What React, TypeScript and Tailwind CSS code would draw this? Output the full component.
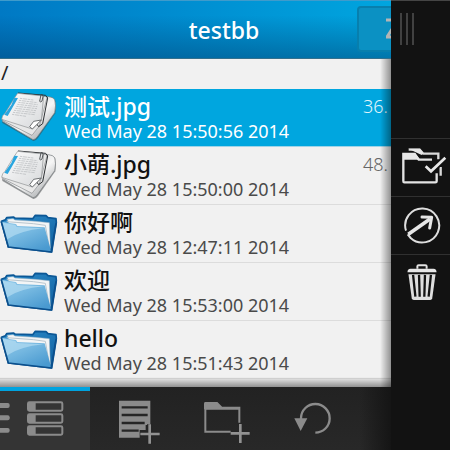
import React from "react";

type Entry = { name: string; date: string; kind: "file" | "folder"; size?: string; selected?: boolean };

const entries: Entry[] = [
  { name: "测试.jpg", date: "Wed May 28 15:50:56 2014", kind: "file", size: "36.", selected: true },
  { name: "小萌.jpg", date: "Wed May 28 15:50:00 2014", kind: "file", size: "48." },
  { name: "你好啊", date: "Wed May 28 12:47:11 2014", kind: "folder" },
  { name: "欢迎", date: "Wed May 28 15:53:00 2014", kind: "folder" },
  { name: "hello", date: "Wed May 28 15:51:43 2014", kind: "folder" },
];

function FileIcon() {
  return (
    <svg viewBox="0 -3 174 174" className="size-[58px] shrink-0" aria-hidden="true">
      <defs>
        <linearGradient id="paper" x1="0" y1="0" x2="1" y2="1">
          <stop offset="0" stopColor="#ffffff" />
          <stop offset="1" stopColor="#d6d8da" />
        </linearGradient>
        <linearGradient id="paperBack" x1="0" y1="0" x2="1" y2="1">
          <stop offset="0" stopColor="#bfc3c6" />
          <stop offset="0.55" stopColor="#f6f6f6" />
          <stop offset="1" stopColor="#8d9194" />
        </linearGradient>
      </defs>
      <path d="M6 98 L100 153 Q106 154 114 144 L166 70 Q170 52 166 32 Q162 22 145 20 L90 30 L30 70Z" fill="#3b3f42" opacity="0.5" />
      <path d="M7 94 L99 149 Q107 149 113 139 L164 68 Q169 46 164 29 Q159 21 145 20 L80 40Z" fill="url(#paperBack)" stroke="#777b7e" strokeWidth="2" />
      <path d="M7 91 L96 136 L118 108 L142 20 L56 12Z" fill="#e8e8e8" stroke="#8a8d90" strokeWidth="2" />
      <path d="M54 9 L137 16 L143 24 L128 101 L116 110 L100 88" fill="none" stroke="#2d3033" strokeWidth="3" />
      <path d="M53 10 L131 18 L124 90 L97 117 L5 88 Q6 76 15 70 L42 26Z" fill="url(#paper)" stroke="#8c8f91" strokeWidth="2" />
      <path d="M43 23 L54 24 L23 78 L13 74 L34 45Z" fill="#2aa6df" />
      <g stroke="#b4b7ba" strokeWidth="2" strokeDasharray="7 2 12 2">
        <path d="M60 25 L100 30 M57 31 L112 38 M55 37 L113 44 M52 43 L112 50 M49 49 L111 56 M46 55 L108 62 M42 61 L106 68 M39 67 L104 74 M36 73 L78 79" />
      </g>
      <path d="M124 90 L97 117 L89 110 L101 94Z" fill="#fff" stroke="#55595b" strokeWidth="2.5" strokeLinejoin="round" />
      <path d="M119 34 L123 14 Q129 12 129 19 L126 33 Q122 38 119 34" fill="none" stroke="#3c4043" strokeWidth="2.5" />
    </svg>
  );
}

function FolderIcon() {
  return (
    <svg viewBox="0 15 174 174" className="size-[58px] shrink-0" aria-hidden="true">
      <defs>
        <linearGradient id="folderFront" x1="0" y1="0" x2="0.7" y2="1">
          <stop offset="0" stopColor="#8fc8ea" />
          <stop offset="0.5" stopColor="#74b7e0" />
          <stop offset="1" stopColor="#4a9ad0" />
        </linearGradient>
        <linearGradient id="folderBack" x1="0" y1="0" x2="1" y2="1">
          <stop offset="0" stopColor="#2f8fce" />
          <stop offset="1" stopColor="#0e5f9e" />
        </linearGradient>
      </defs>
      <path d="M4 64 L16 59 L20 53 L40 51 L45 54 L98 56 L106 46 L138 47 L144 53 L168 56 L169 68 L155 156 L25 141Z" fill="url(#folderBack)" stroke="#0b5796" strokeWidth="5" strokeLinejoin="round" />
      <path d="M22 58 L40 56 L44 60 L105 64 L148 68 L151 145 L30 82Z" fill="#f3f5f6" stroke="#9eb4c2" strokeWidth="1.5" />
      <path d="M20 65 L100 71 L136 76 L148 142" fill="none" stroke="#b9c6ce" strokeWidth="3" />
      <path d="M4 65 L48 72 L52 78 L134 82 L154 156 L25 141Z" fill="url(#folderFront)" />
      <path d="M8 68 L46 75 L50 81 L130 85 Q60 92 19 119Z" fill="#b9def3" opacity="0.65" />
      <path d="M4 65 L25 141 L154 156 L168 70" fill="none" stroke="#0b4f8c" strokeWidth="5" strokeLinejoin="round" />
    </svg>
  );
}

function ListIcon() {
  return (
    <svg viewBox="0 11 270 177" className="h-full w-full" aria-hidden="true">
      <g fill="#8b8b8b">
        <rect x="-8" y="47" width="37" height="15" rx="6" />
        <rect x="-8" y="84" width="37" height="15" rx="6" />
        <rect x="-8" y="122" width="37" height="14" rx="6" />
      </g>
      {[42, 78, 114].map((y) => (
        <g key={y}>
          <rect x="84" y={y + 3} width="103" height="25" rx="4" fill="none" stroke="#8b8b8b" strokeWidth="6" />
          <rect x="84" y={y + 3} width="23" height="25" fill="#8b8b8b" />
        </g>
      ))}
    </svg>
  );
}

function AddFileIcon() {
  return (
    <svg viewBox="0 0 126 135" className="h-[45px] w-[42px]" aria-hidden="true">
      <path d="M3 2H97V75H83V90H65V113H3Z" fill="#8b8b8b" />
      <path d="M11 22H89M11 45H89M11 69H80M11 92H62" stroke="#262626" strokeWidth="7" />
      <path d="M95 73V131M67 102H125" stroke="#262626" strokeWidth="16" />
      <path d="M95 73V131M67 102H125" stroke="#929292" strokeWidth="8" />
    </svg>
  );
}

function AddFolderIcon() {
  return (
    <svg viewBox="0 0 138 126" className="h-[42px] w-[46px]" aria-hidden="true">
      <path d="M3 22V5Q3 2 7 2H38L53 17H106V62M80 89H4V20H103" fill="none" stroke="#8b8b8b" strokeWidth="6" />
      <path d="M3 22V2H39L55 20Z" fill="#8b8b8b" />
      <path d="M109 66V123M80 94H137" stroke="#929292" strokeWidth="8" />
    </svg>
  );
}

function RefreshIcon() {
  return (
    <svg viewBox="0 0 114 102" className="h-[34px] w-[38px]" aria-hidden="true">
      <path d="M21 53V48A43 43 0 1 1 64 92" fill="none" stroke="#8b8b8b" strokeWidth="7" />
      <path d="M1 49H40L20 87Z" fill="#8b8b8b" />
    </svg>
  );
}

function SelectIcon() {
  return (
    <svg viewBox="0 0 138 114" className="h-[38px] w-[46px]" aria-hidden="true">
      <path d="M23 5H56L67 17H112V34M119 57V83" fill="none" stroke="#d9d9d9" strokeWidth="7" />
      <path d="M22 2H57L68 16L62 21Z" fill="#e6e6e6" />
      <path d="M107 76V100Q107 103 103 103H10Q7 103 7 99V18H41L53 35H93" fill="none" stroke="#e3e3e3" strokeWidth="7" />
      <path d="M6 15H42L58 35H6Z" fill="#e6e6e6" />
      <path d="M75 58L90 70L133 30" fill="none" stroke="#121212" strokeWidth="18" />
      <path d="M74 55L90 70L133 29" fill="none" stroke="#e8e8e8" strokeWidth="8" />
    </svg>
  );
}

function OpenIcon() {
  return (
    <svg viewBox="0 0 114 114" className="size-[38px]" aria-hidden="true">
      <path d="M9 74A51 51 0 1 1 23 96L14 85" fill="none" stroke="#dedede" strokeWidth="6" />
      <path d="M16 85L81 39" stroke="#e6e6e6" strokeWidth="11" />
      <path d="M57 33L86 34L80 66" fill="none" stroke="#e6e6e6" strokeWidth="9" strokeLinejoin="round" strokeLinecap="round" />
    </svg>
  );
}

function TrashIcon() {
  return (
    <svg viewBox="0 0 90 112" className="h-[37px] w-[30px]" aria-hidden="true">
      <path d="M31 14V7Q31 4 35 4H55Q59 4 59 7V14" fill="none" stroke="#e3e3e3" strokeWidth="6" />
      <path d="M1 25Q1 14 10 14H80Q89 14 89 25Z" fill="#e6e6e6" />
      <path d="M4 31H86L76 104Q75 109 70 109H20Q15 109 14 104Z" fill="#dedede" />
      <path d="M18 33L25 99M36 33L38 99M54 33L52 99M72 33L65 99" stroke="#121212" strokeWidth="7" />
    </svg>
  );
}

function SortIcon() {
  return (
    <svg viewBox="0 0 14 22" className="h-[22px] w-[14px] shrink-0" aria-hidden="true">
      <path d="M0 2H12L1 19H13" fill="none" stroke="#b5b5b5" strokeWidth="3" />
    </svg>
  );
}

const toolButton = "flex h-full items-center justify-center";
const sideButton = "flex h-[58px] w-full items-center justify-center border-t border-[#303030] pb-0.5";

export default function App() {
  return (
    <div className="flex h-screen w-full overflow-hidden bg-[#121212] font-['Noto_Sans','Noto_Sans_CJK_SC',sans-serif]">
      <main className="flex min-w-0 flex-1 flex-col overflow-hidden bg-[#f1f1f1]">
        <header className="relative flex h-[59px] shrink-0 items-center justify-center overflow-hidden border-t border-b border-t-[#3f9bcb] border-b-[#33708d] bg-linear-to-r from-[#0079c4] to-[#00a5df] pl-[57px]">
          <div className="absolute inset-0 bg-linear-to-b from-transparent from-25% to-[#003d6d]/45" />
          <h1 className="relative text-[23px] leading-8 font-medium text-white">testbb</h1>
          <button
            type="button"
            aria-label="Sort"
            className="absolute top-[5px] -right-8 flex h-[46px] w-[66px] items-center rounded-sm border-2 border-[#087fad] bg-[#0b91c3] pl-[27px]"
          >
            <SortIcon />
          </button>
        </header>

        <div className="relative flex min-h-0 flex-1 flex-col overflow-hidden">
          <p className="h-[30px] shrink-0 px-px text-xl leading-7 text-[#222222]">/</p>
          <ul>
            {entries.map((entry) => (
              <li
                key={entry.name}
                className={
                  entry.selected
                    ? "flex h-[58px] overflow-hidden border-b border-[#9fd4e8] bg-[#00a6df] text-white"
                    : "flex h-[58px] overflow-hidden border-b border-[#dcdcdc] text-[#111111]"
                }
              >
                {entry.kind === "file" ? <FileIcon /> : <FolderIcon />}
                <div className="min-w-0 flex-1 pt-[3px] pl-1.5">
                  <div className="text-[23px] leading-7 font-medium whitespace-nowrap">{entry.name}</div>
                  <div
                    className={
                      entry.selected
                        ? "text-lg leading-[22px] whitespace-nowrap text-white"
                        : "text-lg leading-[22px] whitespace-nowrap text-[#4a4a4a]"
                    }
                  >
                    {entry.date}
                  </div>
                </div>
                {entry.size && (
                  <span
                    className={
                      entry.selected
                        ? "pt-[3px] pr-[3px] text-lg leading-7 font-light text-[#e0f5fc]"
                        : "pt-[3px] pr-[3px] text-lg leading-7 font-light text-[#666666]"
                    }
                  >
                    {entry.size}
                  </span>
                )}
              </li>
            ))}
          </ul>
          <div className="pointer-events-none absolute inset-x-0 bottom-0 h-[10px] bg-linear-to-b from-transparent to-black/40" />
          <div className="pointer-events-none absolute inset-y-0 right-0 w-[11px] bg-linear-to-r from-transparent to-black/40" />
        </div>

        <nav aria-label="Actions" className="flex h-[63px] shrink-0 bg-linear-to-b from-[#222222] to-[#282828]">
          <button type="button" aria-label="List view" className="h-full w-[90px] shrink-0 border-t-4 border-[#00a3df] bg-[#343434]">
            <ListIcon />
          </button>
          <button type="button" aria-label="New file" className={`${toolButton} w-[98px] pt-2`}>
            <AddFileIcon />
          </button>
          <button type="button" aria-label="New folder" className={`${toolButton} w-[78px] pt-2`}>
            <AddFolderIcon />
          </button>
          <button type="button" aria-label="Refresh" className={`${toolButton} w-[94px]`}>
            <RefreshIcon />
          </button>
          <div className="flex-1 bg-linear-to-r from-transparent to-[#151515]" />
        </nav>
      </main>

      <aside className="flex w-[59px] shrink-0 flex-col border-t border-[#454545] bg-[#121212]">
        <div className="flex h-[137px] gap-1 pt-3 pl-[9px]">
          <span className="h-8 w-0.5 bg-[#414141]" />
          <span className="h-8 w-0.5 bg-[#414141]" />
          <span className="h-8 w-0.5 bg-[#414141]" />
        </div>
        <button type="button" aria-label="Select items" className={`${sideButton} pl-1.5`}>
          <SelectIcon />
        </button>
        <button type="button" aria-label="Open" className={`${sideButton} pl-[3px]`}>
          <OpenIcon />
        </button>
        <button type="button" aria-label="Delete" className={`${sideButton} pl-[3px]`}>
          <TrashIcon />
        </button>
      </aside>
    </div>
  );
}
